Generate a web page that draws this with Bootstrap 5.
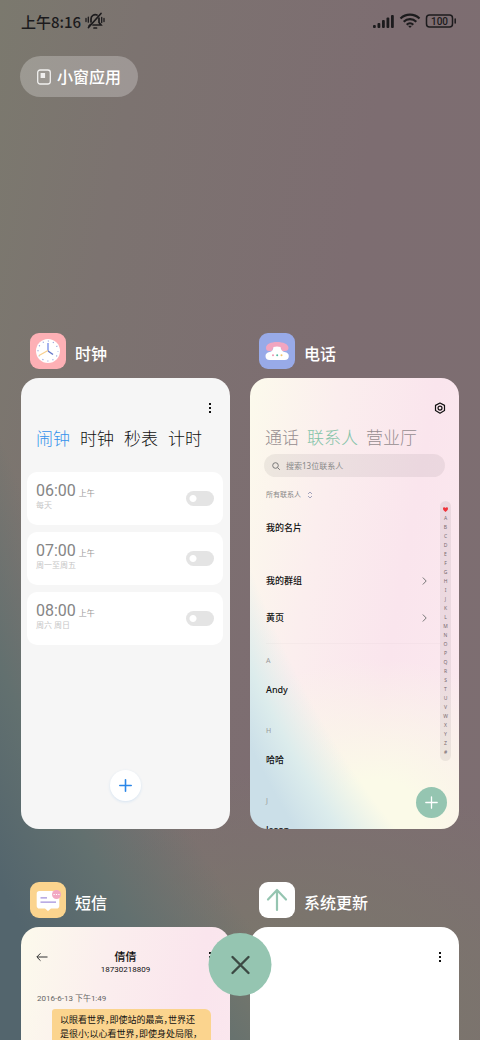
<!DOCTYPE html>
<html lang="zh-CN">
<head>
<meta charset="utf-8">
<meta name="viewport" content="width=device-width, initial-scale=1">
<title>最近任务</title>
<link href="https://cdn.jsdelivr.net/npm/bootstrap@5.3.0/dist/css/bootstrap.min.css" rel="stylesheet">
<style>
  :root {
    --mint: #95c5b1;
    --ink: #1c1b1d;
  }
  body {
    font-family: "Noto Sans", "Noto Sans CJK SC", sans-serif;
    color: #111;
    line-height: 1;
  }
  button { font: inherit; }
  a { color: inherit; text-decoration: none; }
  svg { display: block; flex-shrink: 0; }

  .recents {
    background:
      radial-gradient(257% 238% at 200% -100%, transparent 98%, #62706f 104%, #53656d 110%),
      radial-gradient(80% 24% at 58% 98%, #7a786b 15%, transparent 100%),
      linear-gradient(100deg, #7b796e 0%, #7c7370 22%, #7d6d71 60%, #7d6e71 100%);
  }
  .wallpaper {
    background:
      radial-gradient(257% 238% at 200% -100%, transparent 98%, #dcecec 104%, #cbdfe8 109%),
      radial-gradient(90% 36% at 60% 98%, #fbfae8 25%, transparent 100%),
      linear-gradient(100deg, #fcfaec 0%, #fbeeee 32%, #fae5ed 65%, #fbe9ef 100%);
  }

  .status-bar { height: 42px; padding: 0 23px 0 21px; color: var(--ink); font-size: 15px; font-weight: 500; }
  .status-time { font-family: "Noto Sans CJK SC", sans-serif; }
  .battery-text { font: 500 10px Roboto, sans-serif; }

  .pill {
    margin: 14px 20px 236px;
    height: 41px;
    padding: 0 17px;
    gap: 6px;
    background: #ffffff40;
    color: #fff;
    font-size: 16px;
    font-weight: 500;
  }

  .task-grid { --bs-gutter-x: 20px; --bs-gutter-y: 0; padding: 0 21px; row-gap: 53px; }
  .task-title { gap: 9px; height: 36px; padding-left: 9px; margin-bottom: 9px; color: #fff; font-size: 16px; font-weight: 500; }
  .task-title span { padding-top: 6px; line-height: 24px; }
  .task-card { height: 451px; border-radius: 18px; overflow: hidden; font-size: 9px; }

  .tool-row { padding: 22px 11px 0 15px; height: 38px; }
  .plain { background: none; border: 0; padding: 0; color: inherit; }
  .tabs-row { font-size: 17px; line-height: 24px; font-weight: 300; white-space: nowrap; }

  .clock-app { background: #f6f6f6; }
  .clock-tabs { gap: 10px; margin-top: 11px; padding-left: 15px; }
  .clock-tabs .on { color: #3492ec; }
  .alarms { margin: 21px 7px 0 6px; gap: 7px; }
  .alarm { height: 53px; border-radius: 10px; background: #fff; padding: 9px; }
  .alarm-time { font: 16px/20px Roboto, sans-serif; color: #858585; }
  .alarm-half { font-size: 8px; color: #999; margin-left: 3px; }
  .alarm-days { font-size: 8px; line-height: 8px; color: #c6c6c6; }
  .alarm .form-switch { min-height: 0; }
  .alarm .form-check-input {
    width: 28px; height: 15px; border: 0; background-color: #e4e4e4;
    background-image: radial-gradient(circle at 7px 50%, #fff 3px, transparent 4px);
    background-size: 100% 100%;
  }
  .add-alarm { width: 31px; height: 31px; margin-bottom: 28px; background: #fff; box-shadow: 0 1px 3px #2080e026; }

  .phone-tabs { gap: 8px; margin-top: 10px; padding-left: 15px; color: #968d90; }
  .phone-tabs .on { color: #83c3a8; }
  .contact-search { height: 23px; margin: 4px 14px 0; padding: 0 8px; gap: 6px; background: #0000000f; color: #777; }
  .contact-search input { background: none; border: 0; outline: 0; padding: 0; min-width: 0; font-size: 8px; line-height: 12px; }
  .contact-search input::placeholder { color: #888; opacity: 1; }
  .contact-filter { margin: 10px 16px 0; height: 16px; gap: 6px; }
  .contact-filter select { appearance: none; border: 0; background: none; padding: 0; font-size: 7px; line-height: 16px; color: #888; }
  .contacts { padding: 6px 0 0 16px; font-weight: 500; }
  .contacts a { height: 37px; padding-right: 13px; }
  .contacts .my-card { margin-bottom: 16px; }
  .contacts hr { margin: 7px 0 -7px; border-color: #000; opacity: .02; }
  .contact-group { margin-top: 14px; font-size: 7px; font-weight: 400; color: #999; line-height: 20px; }
  .contacts .person { height: 36px; }
  .index-bar { width: 11px; margin: -2px 8px 0 0; padding: 4px 0; background: #0000000f; color: #77696f; font-size: 5px; text-align: center; height: 260px; }
  .index-bar a { line-height: 9px; }
  .new-contact { width: 31px; height: 31px; right: 12px; bottom: 11px; background: var(--mint); }

  .chat-head { padding: 22px 11px 0 15px; }
  .chat-name { font-size: 11px; line-height: 16px; font-weight: 500; }
  .chat-number { font: 8px/10px Roboto, sans-serif; }
  .chat-date { margin: 17px 16px 0; font: 8px/14px Roboto, "Noto Sans CJK SC", sans-serif; color: #666; }
  .bubble {
    margin: 3px 19px 0 31px; padding: 4px 8px 60px; border-radius: 3px 6px 6px 6px;
    background: #fbd48e; line-height: 14px; white-space: nowrap; font-feature-settings: "halt";
  }
  .close-all { width: 63px; height: 63px; bottom: 44px; background: var(--mint); color: #3c4a44; }
</style>
</head>
<body>
<main class="recents position-relative vh-100 overflow-hidden">
  <header class="status-bar d-flex align-items-center justify-content-between">
    <div class="d-flex align-items-center gap-1">
      <span class="status-time">上午8:16</span>
      <svg width="20" height="18" viewBox="0 0 20 18" fill="none" stroke="currentColor" stroke-width="1.700" stroke-linecap="round">
        <path d="M6 10V7a4.300 4.300 0 0 1 6-4M14 6v4.500l2 2.500H8M5.500 12.500 4 14"/>
        <path d="M3.500 15.500 16 1.500M9 16h2.500"/>
        <path d="M1 6.500v3M3.300 5.200v5M16.700 5.500v5M19 6.500v3" stroke-width="1.300"/>
      </svg>
    </div>
    <div class="d-flex align-items-center">
      <svg width="22" height="14" viewBox="0 0 22 14" fill="currentColor">
        <rect x="0" y="11" width="2.800" height="3" rx="1"/><rect x="4.500" y="9" width="2.800" height="5" rx="1"/><rect x="9" y="6" width="2.800" height="8" rx="1"/><rect x="13.500" y="3.500" width="2.800" height="10.500" rx="1"/><rect x="18" y="1" width="2.800" height="13" rx="1"/>
      </svg>
      <svg class="ms-1" width="22" height="16" viewBox="0 0 22 16" fill="none" stroke="currentColor" stroke-width="2.100">
        <path d="M1.500 5.500a13.500 13.500 0 0 1 19 0M4.700 8.700a9 9 0 0 1 12.600 0"/><path d="M7.700 11.700a4.800 4.800 0 0 1 6.600 0" /><path d="M9 12.800h4L11 15z" fill="currentColor" stroke="none"/>
      </svg>
      <svg class="ms-1" width="32" height="14" viewBox="0 0 32 14" fill="none" stroke="currentColor" stroke-width="1.500">
        <rect x="1.500" y="1" width="26" height="12" rx="3"/><path d="M30.200 5v4" stroke-linecap="round"/>
        <text class="battery-text" x="14.500" y="10.700" text-anchor="middle" fill="currentColor" stroke="none">100</text>
      </svg>
    </div>
  </header>

  <button type="button" class="pill btn rounded-pill border-0 d-flex align-items-center">
    <svg width="14" height="16" viewBox="0 0 14 16" fill="none" stroke="#fff" stroke-width="1.300" opacity=".85"><rect x=".7" y="1" width="12.600" height="14" rx="2.500"/><rect x="3.600" y="4" width="4.500" height="5" fill="#fff" stroke="none"/></svg>
    小窗应用
  </button>

  <section class="row row-cols-2 task-grid mx-0">
    <article class="ps-0">
      <h2 class="task-title d-flex align-items-center">
        <svg width="36" height="36" viewBox="0 0 36 36"><rect width="36" height="36" rx="9" fill="#fdb0b5"/><circle cx="18" cy="18" r="12" fill="#fff"/><circle cx="18" cy="18" r="10" fill="none" stroke="#8b9ad8" stroke-width="1.200" stroke-dasharray="1 4.236" stroke-dashoffset=".5"/><path d="M18 18V10" stroke="#7e93e8" stroke-width="1.400"/><path d="m18 18 5 3.500" stroke="#6476c8" stroke-width="1.500"/><path d="m18 17.500-9 5" stroke="#f8cf8d" stroke-width="1.300"/></svg>
        <span>时钟</span>
      </h2>
      <div class="task-card clock-app d-flex flex-column">
        <div class="tool-row d-flex justify-content-end">
          <button type="button" class="plain" aria-label="更多"><svg width="16" height="16" viewBox="0 0 16 16" fill="#111"><path d="M6 3h2v2H6zM6 7h2v2H6zM6 11h2v2H6z"/></svg></button>
        </div>
        <nav class="tabs-row clock-tabs d-flex"><a href="#" class="on">闹钟</a><a href="#">时钟</a><a href="#">秒表</a><a href="#">计时</a></nav>
        <div class="alarms d-flex flex-column">
          <div class="alarm d-flex align-items-center justify-content-between">
            <label for="alarm1" class="align-self-start"><span class="alarm-time">06:00</span><span class="alarm-half">上午</span><span class="alarm-days d-block">每天</span></label>
            <div class="form-check form-switch p-0 m-0"><input class="form-check-input m-0" type="checkbox" role="switch" id="alarm1"></div>
          </div>
          <div class="alarm d-flex align-items-center justify-content-between">
            <label for="alarm2" class="align-self-start"><span class="alarm-time">07:00</span><span class="alarm-half">上午</span><span class="alarm-days d-block">周一至周五</span></label>
            <div class="form-check form-switch p-0 m-0"><input class="form-check-input m-0" type="checkbox" role="switch" id="alarm2"></div>
          </div>
          <div class="alarm d-flex align-items-center justify-content-between">
            <label for="alarm3" class="align-self-start"><span class="alarm-time">08:00</span><span class="alarm-half">上午</span><span class="alarm-days d-block">周六 周日</span></label>
            <div class="form-check form-switch p-0 m-0"><input class="form-check-input m-0" type="checkbox" role="switch" id="alarm3"></div>
          </div>
        </div>
        <button type="button" class="plain add-alarm rounded-circle mt-auto mx-auto d-flex align-items-center justify-content-center" aria-label="添加闹钟"><svg width="13" height="13" viewBox="0 0 13 13" stroke="#2a86e8" stroke-width="1.600" stroke-linecap="round"><path d="M6.500 .8v11.400M.8 6.500h11.400"/></svg></button>
      </div>
    </article>

    <article class="pe-0">
      <h2 class="task-title d-flex align-items-center">
        <svg width="36" height="36" viewBox="0 0 36 36"><rect width="36" height="36" rx="9" fill="#98aae8"/><path d="M7 15c0-4 5-6 11-6s11.500 2 11.500 6c0 2-1.500 3-3.500 3h-3l-1-3h-8l-1 3h-3c-2 0-3-1-3-3z" fill="#f2a5c0"/><path d="M14.500 14q3.500-1 7 0c.5 3 2 4.500 4 5 3 .5 4.300 2 4.300 4 0 2.500-1.500 4-4 4H10.500c-2.500 0-4-1.500-4-4 0-2 1.500-3.500 4-4 2.500-.5 3.500-2 4-5z" fill="#fff"/><circle cx="14" cy="22.300" r="1" fill="#f097b4"/><circle cx="18.200" cy="22.300" r="1" fill="#55b8a0"/><circle cx="22.500" cy="22.300" r="1" fill="#f5c46c"/></svg>
        <span>电话</span>
      </h2>
      <div class="task-card wallpaper position-relative">
        <div class="tool-row d-flex justify-content-end">
          <button type="button" class="plain" aria-label="设置"><svg width="16" height="16" viewBox="0 0 16 16" fill="none" stroke="#111" stroke-width="1.200"><path d="M8 3 12.500 5.400v5.200L8 13.200 3.500 10.600V5.400z" stroke-linejoin="round"/><circle cx="8" cy="8.100" r="2"/></svg></button>
        </div>
        <nav class="tabs-row phone-tabs d-flex"><a href="#">通话</a><a href="#" class="on">联系人</a><a href="#">营业厅</a></nav>
        <label class="contact-search rounded-pill d-flex align-items-center">
          <svg width="8" height="8" viewBox="0 0 8 8" fill="none" stroke="currentColor"><circle cx="3.500" cy="3.500" r="2.800"/><path d="m5.600 5.600 2.200 2.200"/></svg>
          <input type="search" class="flex-grow-1" placeholder="搜索13位联系人" aria-label="搜索联系人">
        </label>
        <div class="contact-filter d-flex align-items-center">
          <select aria-label="筛选联系人"><option>所有联系人</option></select>
          <svg width="6" height="8" viewBox="0 0 6 8" fill="none" stroke="#8b8fae" stroke-width=".8"><path d="m1 3 2-2 2 2M1 5l2 2 2-2"/></svg>
        </div>
        <div class="d-flex">
          <div class="contacts flex-grow-1">
            <a href="#" class="my-card d-flex align-items-center">我的名片</a>
            <a href="#" class="d-flex align-items-center justify-content-between">我的群组<svg width="5" height="8" viewBox="0 0 5 8" fill="none" stroke="#777"><path d="m.8.500 3.400 3.500L.8 7.500"/></svg></a>
            <a href="#" class="d-flex align-items-center justify-content-between">黄页<svg width="5" height="8" viewBox="0 0 5 8" fill="none" stroke="#777"><path d="m.8.500 3.400 3.500L.8 7.500"/></svg></a>
            <hr>
            <div class="contact-group">A</div><a href="#" class="person d-flex align-items-center">Andy</a>
            <div class="contact-group">H</div><a href="#" class="person d-flex align-items-center">哈哈</a>
            <div class="contact-group">J</div><a href="#" class="person d-flex align-items-center">Jason</a>
          </div>
          <nav class="index-bar rounded-pill d-flex flex-column" aria-label="字母索引">
            <a href="#" aria-label="收藏"><svg class="mx-auto" width="5" height="9" viewBox="0 0 5 9"><path d="M2.500 7C.8 5.600 0 4.800 0 3.700 0 2.100 1.800 1.800 2.500 3 3.200 1.800 5 2.100 5 3.700 5 4.800 4.200 5.600 2.500 7z" fill="#f0343c"/></svg></a>
            <a href="#">A</a><a href="#">B</a><a href="#">C</a><a href="#">D</a><a href="#">E</a><a href="#">F</a><a href="#">G</a><a href="#">H</a><a href="#">I</a><a href="#">J</a><a href="#">K</a><a href="#">L</a><a href="#">M</a><a href="#">N</a><a href="#">O</a><a href="#">P</a><a href="#">Q</a><a href="#">R</a><a href="#">S</a><a href="#">T</a><a href="#">U</a><a href="#">V</a><a href="#">W</a><a href="#">X</a><a href="#">Y</a><a href="#">Z</a><a href="#">#</a>
          </nav>
        </div>
        <button type="button" class="plain new-contact rounded-circle position-absolute d-flex align-items-center justify-content-center" aria-label="新建联系人"><svg width="13" height="13" viewBox="0 0 13 13" stroke="#fff" stroke-width="1.300" stroke-linecap="round"><path d="M6.500 .8v11.400M.8 6.500h11.400"/></svg></button>
      </div>
    </article>

    <article class="ps-0">
      <h2 class="task-title d-flex align-items-center">
        <svg width="36" height="36" viewBox="0 0 36 36"><rect width="36" height="36" rx="9" fill="#fbd48e"/><path d="M9.500 9h17a2.800 2.800 0 0 1 2.800 2.800v12a2.800 2.800 0 0 1-2.800 2.800H21L18 29l-3-2.400H9.500a2.800 2.800 0 0 1-2.800-2.800v-12A2.800 2.800 0 0 1 9.500 9z" fill="#fff"/><path d="M10.500 15.800h6.500M10.500 20.200h15.500" stroke="#a491dc" stroke-width="1.300"/><circle cx="26.500" cy="12.500" r="4.500" fill="#f2a8c3"/><path d="M23.500 12.500h6" stroke="#fff" stroke-width="1.200" stroke-dasharray="1.200 1.200"/></svg>
        <span>短信</span>
      </h2>
      <div class="task-card wallpaper">
        <div class="chat-head d-flex justify-content-between">
          <button type="button" class="plain align-self-start" aria-label="返回"><svg width="12" height="16" viewBox="0 0 12 16" fill="none" stroke="#333"><path d="M11.500 8H1M4.500 4.300.8 8l3.700 3.700"/></svg></button>
          <div class="text-center"><div class="chat-name">倩倩</div><div class="chat-number">18730218809</div></div>
          <button type="button" class="plain align-self-start" aria-label="更多"><svg width="16" height="16" viewBox="0 0 16 16" fill="#111"><path d="M6 3h2v2H6zM6 7h2v2H6zM6 11h2v2H6z"/></svg></button>
        </div>
        <div class="chat-date">2016-6-13 下午1:49</div>
        <div class="bubble">以眼看世界，即使站的最高，世界还<br>是很小;以心看世界，即使身处局限，</div>
      </div>
    </article>

    <article class="pe-0">
      <h2 class="task-title d-flex align-items-center">
        <svg width="36" height="36" viewBox="0 0 36 36"><rect width="36" height="36" rx="9" fill="#fff"/><path d="M18 28V8.500M9 17.500l9-9.500 9 9.500" fill="none" stroke="#95c5b1" stroke-width="2.200" stroke-linecap="round" stroke-linejoin="round"/></svg>
        <span>系统更新</span>
      </h2>
      <div class="task-card bg-white">
        <div class="tool-row d-flex justify-content-end">
          <button type="button" class="plain" aria-label="更多"><svg width="16" height="16" viewBox="0 0 16 16" fill="#111"><path d="M7 3h2v2H7zM7 7h2v2H7zM7 11h2v2H7z"/></svg></button>
        </div>
      </div>
    </article>
  </section>

  <button type="button" class="plain close-all rounded-circle position-absolute start-50 translate-middle-x d-flex align-items-center justify-content-center" aria-label="全部清除">
    <svg width="20" height="20" viewBox="0 0 20 20" stroke="currentColor" stroke-width="2.400" stroke-linecap="round"><path d="m2 2 16 16M18 2 2 18"/></svg>
  </button>
</main>
<script src="https://cdn.jsdelivr.net/npm/bootstrap@5.3.0/dist/js/bootstrap.bundle.min.js"></script>
</body>
</html>
